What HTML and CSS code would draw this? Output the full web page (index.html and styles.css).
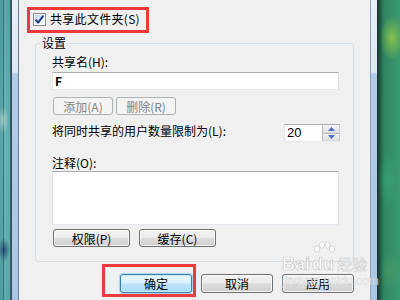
FILE: index.html
```html
<!DOCTYPE html>
<html lang="zh-CN">
<head>
<meta charset="utf-8">
<title>共享设置</title>
<link rel="stylesheet" href="styles.css">
</head>
<body>
<div class="desk-left"></div>
<div class="frame frame-left"></div>
<main class="content">
  <label class="share">
    <span class="checkbox">
      <svg width="13" height="13" viewBox="0 0 13 13">
        <defs>
          <linearGradient id="cbg" x1="0" y1="0" x2="1" y2="1">
            <stop offset="0" stop-color="#cbd8ea"/>
            <stop offset="1" stop-color="#f4f8fc"/>
          </linearGradient>
        </defs>
        <rect x="0.5" y="0.5" width="12" height="12" fill="#fcfcfc" stroke="#8e8f8f"/>
        <rect x="2" y="2" width="9" height="9" fill="url(#cbg)"/>
        <path d="M2.6 6.6 L5.1 9.6 L10.4 2.6" fill="none" stroke="#1a3a8f" stroke-width="1.9" stroke-linejoin="round"/>
      </svg>
    </span>
    <span class="share-text">共享此文件夹(S)</span>
  </label>

  <fieldset class="group">
    <legend>设置</legend>
    <div class="label first">共享名(H):</div>
    <div class="field">F</div>
    <div class="btn-row small">
      <button class="btn disabled w-add">添加(A)</button>
      <button class="btn disabled w-add">删除(R)</button>
    </div>
    <div class="limit-row">
      <div class="label">将同时共享的用户数量限制为(L):</div>
      <div class="spin">
        <span class="spin-val">20</span>
        <span class="spin-btns">
          <span class="spin-btn">
            <svg width="7" height="4" viewBox="0 0 7 4"><path d="M0 4 L3.5 0 L7 4 Z" fill="#4a6fc0"/></svg>
          </span>
          <span class="spin-btn">
            <svg width="7" height="4" viewBox="0 0 7 4"><path d="M0 0 L3.5 4 L7 0 Z" fill="#4a6fc0"/></svg>
          </span>
        </span>
      </div>
    </div>
    <div class="label note">注释(O):</div>
    <div class="field area"></div>
    <div class="btn-row wide">
      <button class="btn w-perm">权限(P)</button>
      <button class="btn w-perm">缓存(C)</button>
    </div>
  </fieldset>

  <div class="actions">
    <button class="btn default w-act">确定</button>
    <button class="btn w-act">取消</button>
    <button class="btn w-act">应用</button>
  </div>

  <div class="mark mark-top"></div>
  <div class="mark mark-ok"></div>

  <div class="wm">
    <div class="wm-line"><span class="wm-bai">Bai</span><span class="wm-du">du<svg class="paw" width="22" height="16" viewBox="0 0 22 16"><ellipse cx="4" cy="8" rx="2.6" ry="3.2" fill="#fff" stroke="#c8c8c8" stroke-width="0.8"/><ellipse cx="9" cy="4" rx="2.6" ry="3.2" fill="#fff" stroke="#c8c8c8" stroke-width="0.8"/><ellipse cx="14.5" cy="4" rx="2.6" ry="3.2" fill="#fff" stroke="#c8c8c8" stroke-width="0.8"/><ellipse cx="19" cy="8" rx="2.6" ry="3.2" fill="#fff" stroke="#c8c8c8" stroke-width="0.8"/></svg></span><span class="wm-jy">经验</span></div>
    <div class="wm-url">jingyan.baidu.com</div>
  </div>
</main>
<div class="frame frame-right"></div>
<div class="desk-right"></div>
</body>
</html>
```

FILE: styles.css
```css
html, body {
  margin: 0;
  padding: 0;
}
body {
  width: 400px;
  height: 300px;
  overflow: hidden;
  display: flex;
  font-family: "Noto Sans CJK SC", "Liberation Sans", sans-serif;
  font-size: 12px;
  line-height: 14px;
  color: #000;
}

.desk-left {
  width: 11px;
  flex: none;
  background:
    linear-gradient(90deg, #5aa6a8 0, #5aa6a8 3px, #3e6f74 3px, #3e6f74 4px, #6fb7b9 4px, #5fb0b3 10px, #3f5a60 10px),
    #5aa6a8;
  position: relative;
}
.desk-left::after {
  content: "";
  display: block;
  position: absolute;
  left: 0;
  top: 0;
  width: 10px;
  height: 300px;
  background:
    radial-gradient(ellipse 6px 14px at 3px 120px, rgba(230,235,225,0.5), transparent),
    radial-gradient(ellipse 6px 12px at 4px 250px, rgba(20,40,90,0.7), transparent),
    linear-gradient(180deg, rgba(40,120,120,0.25), rgba(80,170,180,0.1) 50%, rgba(40,120,130,0.2));
}

.frame {
  width: 6px;
  flex: none;
  background: linear-gradient(180deg, #e8f0f8 0, #dce8f3 72px, #b1cce6 74px, #a9c7e4 100%);
}
.frame-left {
  border-left: 1px solid #3b5058;
  border-right: 1px solid #6b7f92;
}
.frame-right {
  border-left: 1px solid #8fa5bc;
  border-right: 1px solid #24343a;
}

.desk-right {
  width: 22px;
  flex: none;
  background:
    radial-gradient(ellipse 12px 22px at 14px 38px, rgba(150,200,70,0.85), transparent),
    radial-gradient(ellipse 10px 30px at 10px 180px, rgba(60,170,120,0.6), transparent),
    radial-gradient(ellipse 10px 20px at 12px 270px, rgba(80,160,100,0.6), transparent),
    linear-gradient(90deg, #163f30 0, #1f5a44 2px, #2f8561 6px, #3b9a70 100%);
}

.content {
  position: relative;
  width: 351px;
  flex: none;
  background: #f0f0f0;
  display: flex;
  flex-direction: column;
}

/* share checkbox */
.share {
  display: flex;
  align-items: center;
  gap: 4px;
  margin: 12px 0 0 14px;
  height: 14px;
}
.share-text {
  letter-spacing: 0.3px;
}
.checkbox {
  width: 13px;
  height: 13px;
  display: block;
}
.checkbox svg {
  display: block;
}

/* group box */
.group {
  box-sizing: border-box;
  width: 319px;
  margin: 10px 0 0 16px;
  padding: 0 14px 14px 16px;
  border: 1px solid #d5dfe5;
  border-radius: 3px;
  min-width: 0;
}
.group legend {
  margin-left: -12px;
  padding: 0 2px;
  line-height: 14px;
  font-size: 12px;
}

.label {
  white-space: nowrap;
}
.label.first {
  margin-top: 5px;
}
.label.note {
  margin-top: 14px;
}

.field {
  box-sizing: border-box;
  height: 18px;
  margin-top: 3px;
  background: #fff;
  border: 1px solid;
  border-color: #abadb3 #dbdfe6 #e3e9ef #e2e3ea;
  padding: 1px 2px;
  line-height: 14px;
  font-weight: bold;
}
.field.area {
  height: 54px;
  margin-top: 1px;
}

.btn-row {
  display: flex;
}
.btn-row.small {
  margin-top: 7px;
  margin-left: 1px;
  gap: 3px;
}
.btn-row.wide {
  margin-top: 4px;
  margin-left: 1px;
  gap: 9px;
}

.btn {
  box-sizing: border-box;
  height: 18px;
  padding: 0;
  margin: 0;
  border: 1px solid #707070;
  border-radius: 3px;
  background: linear-gradient(180deg, #f2f2f2 0%, #ebebeb 48%, #dddddd 52%, #cfcfcf 100%);
  box-shadow: inset 0 0 0 1px rgba(255,255,255,0.75);
  font-family: "Noto Sans CJK SC", "Liberation Sans", sans-serif;
  font-size: 12px;
  line-height: 15px;
  color: #000;
  text-align: center;
}
.btn.disabled {
  border-color: #adb2b5;
  background: #f4f4f4;
  box-shadow: none;
  color: #838383;
}
.btn.default {
  border-color: #3c7fb1;
  background: linear-gradient(180deg, #eaf6fd 0%, #d9f0fc 48%, #bee6fd 52%, #a7d9f5 100%);
  box-shadow: inset 0 0 0 1px #c4ebfc, 0 0 1px 1px rgba(80,180,230,0.45);
}
.w-add { width: 60px; }
.w-perm { width: 77px; }
.w-act { width: 72px; height: 19px; }

/* spinner row */
.limit-row {
  display: flex;
  justify-content: space-between;
  align-items: flex-start;
  margin-top: 9px;
}
.spin {
  box-sizing: border-box;
  width: 56px;
  height: 18px;
  margin-right: -1px;
  display: flex;
  background: #fff;
  border: 1px solid;
  border-color: #abadb3 #c8ccd2 #e3e9ef #e2e3ea;
}
.spin-val {
  flex: 1;
  padding-left: 2px;
  font-family: "Liberation Sans", sans-serif;
  font-size: 13px;
  line-height: 16px;
}
.spin-btns {
  width: 16px;
  display: flex;
  flex-direction: column;
  border-left: 1px solid #b9bcc2;
}
.spin-btn {
  flex: 1;
  display: flex;
  align-items: center;
  justify-content: center;
  background: linear-gradient(180deg, #f3f3f3, #dcdcdc);
  border-bottom: 1px solid #b5b8bd;
}
.spin-btn:last-child {
  border-bottom: 0;
}
.spin-btn svg {
  display: block;
}

/* dialog buttons */
.actions {
  display: flex;
  justify-content: flex-end;
  gap: 9px;
  margin: 12px 16px 0 0;
}

/* red annotation boxes */
.mark {
  position: absolute;
  box-sizing: border-box;
  border: 3px solid #ec3a3d;
}
.mark-top {
  left: 8px;
  top: 7px;
  width: 122px;
  height: 26px;
}
.mark-ok {
  left: 83px;
  top: 264px;
  width: 94px;
  height: 33px;
}

/* watermark */
.wm {
  position: absolute;
  left: 263px;
  top: 245px;
  color: rgba(255,255,255,0.8);
  pointer-events: none;
}
.wm-line {
  display: flex;
  align-items: flex-end;
  height: 28px;
}
.wm-bai, .wm-du {
  font-family: "Liberation Sans", sans-serif;
  font-weight: bold;
  font-size: 18px;
  line-height: 18px;
  -webkit-text-stroke: 0.7px rgba(160,160,160,0.55);
}
.wm-du {
  position: relative;
  margin-left: 2px;
}
.wm-du .paw {
  position: absolute;
  left: 1px;
  top: -14px;
  opacity: 0.8;
}
.wm-jy {
  margin-left: 3px;
  font-size: 15px;
  line-height: 18px;
  -webkit-text-stroke: 0.5px rgba(160,160,160,0.5);
}
.wm-url {
  font-family: "Liberation Sans", sans-serif;
  font-size: 12px;
  line-height: 14px;
  margin-top: 1px;
  -webkit-text-stroke: 0.4px rgba(150,150,150,0.45);
}
```
